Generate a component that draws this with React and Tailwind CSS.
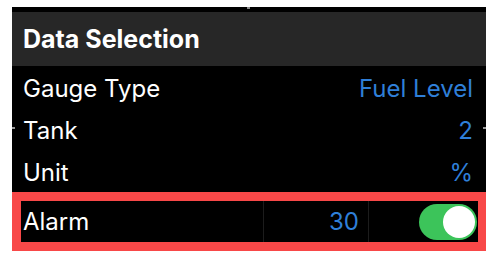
import React from "react";

const rows = [
    { label: "Gauge Type", value: "Fuel Level" },
    { label: "Tank", value: "2", ticks: true },
    { label: "Unit", value: "%" },
];

const Toggle = () => (
    <div className="w-[58px] h-[36px] rounded-full bg-[#3cc45a] flex items-center justify-end p-[2px]">
        <div className="w-[32px] h-[32px] rounded-full bg-white" />
    </div>
);

export default function App() {
    return (
        <div className="w-[497px] h-[261px] bg-white pt-[7px] pl-[12px] pr-[11px] font-['Inter','Liberation_Sans',sans-serif]">
            <div className="relative bg-black pt-[5px]">
                <div className="absolute top-0 left-[235px] w-[3px] h-[2px] bg-[#8a8a8a]" />
                <div className="h-[54px] bg-[#272727] flex items-center pl-[11px] pt-[2px]">
                    <h1 className="text-[25px] font-bold text-white">Data Selection</h1>
                </div>

                {rows.map((row) => (
                    <div key={row.label} className="relative h-[42px] flex items-center justify-between pl-[11px] pr-[13px] pt-[3px] text-[24px]">
                        {row.ticks && (
                            <>
                                <div className="absolute left-0 top-[19px] w-[3px] h-[2px] bg-[#9a9a9a]" />
                                <div className="absolute right-0 top-[19px] w-[3px] h-[2px] bg-[#9a9a9a]" />
                            </>
                        )}
                        <span className="text-white">{row.label}</span>
                        <span className="text-[#2f7fd8]">{row.value}</span>
                    </div>
                ))}
            </div>

            <div className="border-[9px] border-r-[8px] border-[#f84848] bg-black h-[59px] flex items-stretch text-[24px]">
                <div className="w-[242px] flex items-center pl-[2px] text-white">Alarm</div>
                <div className="w-[106px] border-x border-[#1c1c1c] flex items-center justify-end pr-[9px] text-[#2f7fd8]">30</div>
                <div className="flex-1 flex items-center justify-end pr-[1px]">
                    <Toggle />
                </div>
            </div>
        </div>
    );
}
